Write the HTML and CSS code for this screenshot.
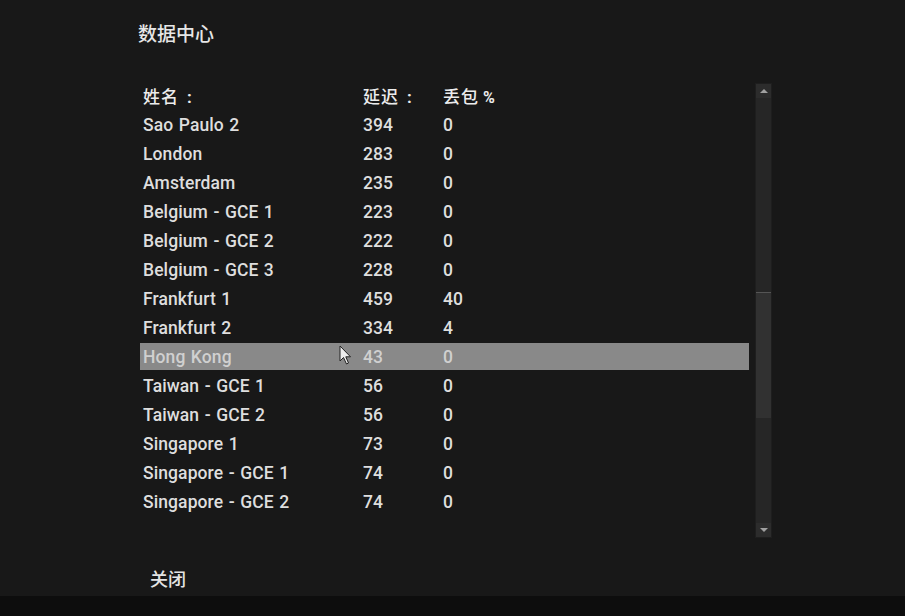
FILE: index.html
```html
<!DOCTYPE html>
<html lang="zh">
<head>
<meta charset="utf-8">
<link rel="stylesheet" href="styles.css">
</head>
<body>
<div class="screen">
  <main class="dialog">
    <h1 class="title">数据中心</h1>
    <div class="panel">
      <div class="list">
        <div class="row head"><span>姓名<span class="colon">:</span></span><span>延迟<span class="colon">:</span></span><span>丢包<span class="pct">%</span></span></div>
        <div class="row"><span>Sao Paulo 2</span><span>394</span><span>0</span></div>
        <div class="row"><span>London</span><span>283</span><span>0</span></div>
        <div class="row"><span>Amsterdam</span><span>235</span><span>0</span></div>
        <div class="row"><span>Belgium - GCE 1</span><span>223</span><span>0</span></div>
        <div class="row"><span>Belgium - GCE 2</span><span>222</span><span>0</span></div>
        <div class="row"><span>Belgium - GCE 3</span><span>228</span><span>0</span></div>
        <div class="row"><span>Frankfurt 1</span><span>459</span><span>40</span></div>
        <div class="row"><span>Frankfurt 2</span><span>334</span><span>4</span></div>
        <div class="row active"><span>Hong Kong</span><span>43</span><span>0</span>
          <svg class="cursor" width="14" height="20" viewBox="0 0 14 20"><path d="M1 1 L1 16 L4.5 12.5 L7.5 19 L9.5 18 L6.8 11.8 L11.5 11.8 Z" fill="#eee" stroke="#222" stroke-width="1"/></svg>
        </div>
        <div class="row"><span>Taiwan - GCE 1</span><span>56</span><span>0</span></div>
        <div class="row"><span>Taiwan - GCE 2</span><span>56</span><span>0</span></div>
        <div class="row"><span>Singapore 1</span><span>73</span><span>0</span></div>
        <div class="row"><span>Singapore - GCE 1</span><span>74</span><span>0</span></div>
        <div class="row"><span>Singapore - GCE 2</span><span>74</span><span>0</span></div>
      </div>
      <div class="scrollbar">
        <div class="btn up"><span class="tri-up"></span></div>
        <div class="track">
          <div class="space-top"></div>
          <div class="thumb"></div>
          <div class="space-bottom"></div>
        </div>
        <div class="btn down"><span class="tri-down"></span></div>
      </div>
    </div>
    <div class="footer">关闭</div>
  </main>
  <div class="bottom-strip"></div>
</div>
</body>
</html>
```

FILE: styles.css
```css
* { box-sizing: border-box; }
html, body {
  margin: 0;
  padding: 0;
  background: #181818;
  width: 905px;
  height: 616px;
  overflow: hidden;
}
body {
  font-family: Roboto, "Noto Sans CJK SC", sans-serif;
  color: #e2e2e2;
}
.screen {
  display: flex;
  flex-direction: column;
  height: 616px;
}
.dialog {
  flex: 1;
  padding-left: 138px;
  display: flex;
  flex-direction: column;
}
.title {
  margin: 0;
  padding-top: 20px;
  height: 82px;
  font-family: "Noto Sans CJK SC", sans-serif;
  font-weight: 500;
  font-size: 19px;
  line-height: 26px;
  color: #e6e6e6;
}
.panel {
  display: flex;
  margin-left: 2px;
}
.list {
  width: 609px;
  display: flex;
  flex-direction: column;
  gap: 2px;
}
.row {
  position: relative;
  display: grid;
  grid-template-columns: 220px 80px 1fr;
  height: 27px;
  align-items: center;
  padding-left: 3px;
  font-size: 17.5px;
  font-weight: 500;
  color: #dedede;
  letter-spacing: 0.1px;
  word-spacing: 1px;
}
.row.head {
  font-family: "Noto Sans CJK SC", sans-serif;
  font-size: 17px;
  font-weight: 500;
  color: #ececec;
  letter-spacing: 1px;
  padding-left: 3px;
}
.colon {
  display: inline-block;
  width: 18px;
  margin-left: 2px;
  text-align: center;
  font-family: Roboto, sans-serif;
  font-weight: 700;
}
.pct {
  font-family: Roboto, sans-serif;
  font-size: 16px;
  font-weight: 700;
  margin-left: 4px;
  letter-spacing: 0;
}
.row.active {
  background: #898989;
  color: #d0d0d0;
}
.cursor {
  position: absolute;
  left: 199px;
  top: 2px;
}
.scrollbar {
  margin-left: 6px;
  margin-top: 1px;
  width: 17px;
  height: 455px;
  display: flex;
  flex-direction: column;
  background: #222;
  border: 1px solid #1e1e1e;
}
.btn {
  height: 14px;
  background: #2c2c2c;
  display: flex;
  align-items: center;
  justify-content: center;
}
.tri-up {
  width: 0; height: 0;
  border-left: 4px solid transparent;
  border-right: 4px solid transparent;
  border-bottom: 4px solid #a0a0a0;
}
.tri-down {
  width: 0; height: 0;
  border-left: 4px solid transparent;
  border-right: 4px solid transparent;
  border-top: 4px solid #a0a0a0;
}
.track {
  flex: 1;
  display: flex;
  flex-direction: column;
}
.space-top { height: 194px; background: #262626; }
.thumb {
  height: 126px;
  background: #313131;
  border-top: 1px solid #555;
}
.space-bottom { flex: 1; background: #262626; }
.footer {
  margin-top: 28px;
  padding-left: 12px;
  font-family: "Noto Sans CJK SC", sans-serif;
  font-size: 18px;
  font-weight: 500;
  color: #e4e4e4;
  line-height: 24px;
}
.bottom-strip {
  height: 20px;
  background: #0d0d0d;
}
```
